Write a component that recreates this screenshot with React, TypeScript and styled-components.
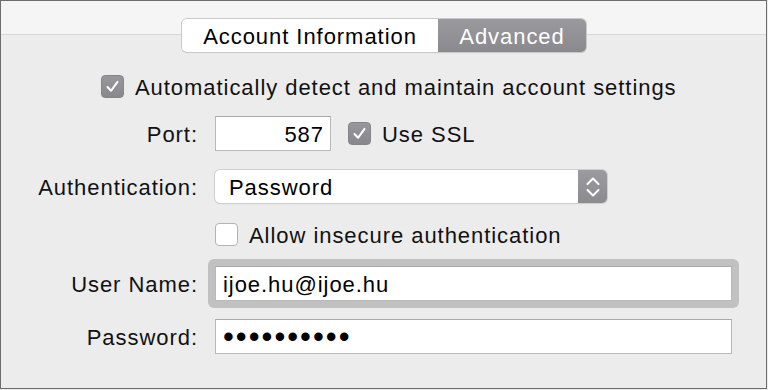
import styled, { createGlobalStyle } from 'styled-components';

const GlobalStyle = createGlobalStyle`
  html, body {
    margin: 0;
    padding: 0;
    background: #ececec;
  }
  body {
    font-family: "Liberation Sans", Arial, sans-serif;
    color: #111;
  }
`;

const Window = styled.div`
  box-sizing: border-box;
  width: 767px;
  height: 389px;
  border: 1px solid #6c6c6c;
  background: linear-gradient(#f5f5f5 0 33px, #d8d8d8 33px 34px, #ececec 34px);
  display: flex;
  flex-direction: column;
  font-size: 22px;
  letter-spacing: 0.95px;
`;

const Tabs = styled.div`
  display: flex;
  align-self: flex-start;
  margin: 18px 0 0 181px;
  height: 33px;
  border-radius: 5px;
  overflow: hidden;
  box-shadow: 0 0 0 1px #c9c9c9, 0 1px 1px rgba(0, 0, 0, 0.12);
`;

const Tab = styled.div<{ $active?: boolean }>`
  display: flex;
  align-items: center;
  justify-content: center;
  padding-top: 3px;
  width: ${(p) => (p.$active ? '148px' : '256px')};
  background: ${(p) => (p.$active ? 'linear-gradient(#9a999e, #8a898e)' : '#fff')};
  color: ${(p) => (p.$active ? '#fff' : '#000')};
`;

const CheckRow = styled.label<{ $top: number; $left: number }>`
  display: flex;
  align-items: center;
  gap: 11px;
  margin: ${(p) => p.$top}px 0 0 ${(p) => p.$left}px;
  height: 24px;
`;

const CheckText = styled.span`
  padding-top: 3px;
`;

const Box = styled.span<{ $checked?: boolean }>`
  box-sizing: border-box;
  width: 23px;
  height: 23px;
  border-radius: 4px;
  display: flex;
  align-items: center;
  justify-content: center;
  flex-shrink: 0;
  background: ${(p) => (p.$checked ? 'linear-gradient(#98979c, #88878c)' : '#fff')};
  border: 1px solid ${(p) => (p.$checked ? '#85848a' : '#b3b3b3')};
`;

const Row = styled.div<{ $top: number; $height: number }>`
  display: grid;
  grid-template-columns: 196px 1fr;
  column-gap: 18px;
  align-items: center;
  margin-top: ${(p) => p.$top}px;
  height: ${(p) => p.$height}px;
`;

const Label = styled.span`
  text-align: right;
  padding-top: 3px;
  margin-right: -1px;
`;

const Controls = styled.div`
  display: flex;
  align-items: center;
  gap: 17px;
`;

const Field = styled.div<{ $width: number; $align?: string }>`
  box-sizing: border-box;
  width: ${(p) => p.$width}px;
  height: 35px;
  background: #fff;
  border: 1px solid #b9b9b9;
  border-top-color: #a9a9a9;
  display: flex;
  align-items: center;
  justify-content: ${(p) => p.$align || 'flex-start'};
  padding: 3px 6px 0 7px;
  color: #000;
`;

const FocusRing = styled.div`
  margin-left: -7px;
  padding: 7px;
  width: fit-content;
  border-radius: 6px;
  background: #c1c1c1;
`;

const Dots = styled.span`
  font-size: 31px;
  line-height: 1;
  letter-spacing: 2px;
  margin-top: -4px;
`;

const Select = styled.div`
  box-sizing: border-box;
  width: 392px;
  height: 33px;
  display: flex;
  background: #fff;
  border-radius: 5px;
  overflow: hidden;
  box-shadow: 0 0 0 1px #cfcfcf, 0 1px 1px rgba(0, 0, 0, 0.15);
`;

const SelectValue = styled.span`
  flex: 1;
  display: flex;
  align-items: center;
  padding: 3px 0 0 14px;
  color: #000;
`;

const Stepper = styled.span`
  width: 29px;
  display: flex;
  align-items: center;
  justify-content: center;
  background: linear-gradient(#9c9ba0, #8b8a8f);
`;

function Check() {
  return (
    <svg width="15" height="15" viewBox="0 0 15 15">
      <path d="M2.5 8 L6 11.8 L12.5 2.8" fill="none" stroke="#fff" strokeWidth="2" strokeLinecap="round" strokeLinejoin="round" />
    </svg>
  );
}

function Chevrons() {
  return (
    <svg width="16" height="28" viewBox="0 0 16 28">
      <path d="M2.5 11 L8 5.5 L13.5 11 M2.5 17 L8 22.5 L13.5 17" fill="none" stroke="#fff" strokeWidth="2" strokeLinecap="round" strokeLinejoin="round" />
    </svg>
  );
}

export default function App() {
  return (
    <>
      <GlobalStyle />
      <Window>
        <Tabs>
          <Tab>Account Information</Tab>
          <Tab $active>Advanced</Tab>
        </Tabs>

        <CheckRow $top={22} $left={100}>
          <Box $checked>
            <Check />
          </Box>
          <CheckText>Automatically detect and maintain account settings</CheckText>
        </CheckRow>

        <Row $top={18} $height={35}>
          <Label>Port:</Label>
          <Controls>
            <Field $width={116} $align="flex-end">587</Field>
            <CheckRow $top={0} $left={0}>
              <Box $checked>
                <Check />
              </Box>
              <CheckText>Use SSL</CheckText>
            </CheckRow>
          </Controls>
        </Row>

        <Row $top={18} $height={35}>
          <Label>Authentication:</Label>
          <Select>
            <SelectValue>Password</SelectValue>
            <Stepper>
              <Chevrons />
            </Stepper>
          </Select>
        </Row>

        <Row $top={18} $height={25}>
          <span />
          <CheckRow $top={0} $left={0}>
            <Box />
            <CheckText>Allow insecure authentication</CheckText>
          </CheckRow>
        </Row>

        <Row $top={12} $height={49}>
          <Label>User Name:</Label>
          <FocusRing>
            <Field $width={517}>ijoe.hu@ijoe.hu</Field>
          </FocusRing>
        </Row>

        <Row $top={11} $height={35}>
          <Label>Password:</Label>
          <Field $width={517}>
            <Dots>••••••••••</Dots>
          </Field>
        </Row>
      </Window>
    </>
  );
}
